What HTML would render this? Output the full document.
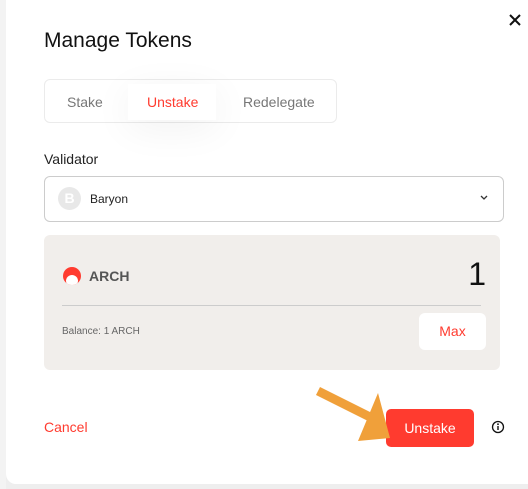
<!DOCTYPE html>
<html><head><style>
body{margin:0;width:528px;height:489px;background:#eeeeee;font-family:"Liberation Sans",sans-serif;position:relative;overflow:hidden}
.m{position:absolute;left:6px;top:-10px;width:540px;height:494px;background:#fff;border-radius:10px}
.a{position:absolute}
</style></head><body>
<div class="a" style="left:0;top:0;width:6px;height:489px;background:#f3f3f3"></div>
<div class="m"></div>
<svg class="a" style="left:508px;top:13px" width="14" height="14"><path d="M2 2L12 12M12 2L2 12" stroke="#111" stroke-width="2"/></svg>
<div class="a" style="left:44px;top:29px;font-size:21px;color:#111">Manage Tokens</div>
<div class="a" style="left:44px;top:79px;width:293px;height:44px;border:1px solid #ebebeb;border-radius:6px;box-sizing:border-box"></div>
<div class="a" style="left:128px;top:84px;width:88px;height:36px;background:#fff;box-shadow:0 8px 40px rgba(0,0,0,.06)"></div>
<div class="a" style="left:67px;top:94px;font-size:14px;color:#777">Stake</div>
<div class="a" style="left:147px;top:94px;font-size:14px;color:#ff3b2f">Unstake</div>
<div class="a" style="left:243px;top:94px;font-size:14px;color:#777">Redelegate</div>
<div class="a" style="left:44px;top:151px;font-size:14px;color:#222">Validator</div>
<div class="a" style="left:44px;top:176px;width:460px;height:46px;border:1px solid #ccc;border-radius:6px;box-sizing:border-box"></div>
<div class="a" style="left:58px;top:187px;width:23px;height:23px;border-radius:50%;background:#e8e8e8;color:#fff;font-size:14px;text-align:center;line-height:23px;font-weight:bold">B</div>
<div class="a" style="left:90px;top:192px;font-size:12px;color:#222">Baryon</div>
<svg class="a" style="left:479px;top:194px" width="10" height="8"><path d="M2 2l3 3 3-3" stroke="#333" stroke-width="1.3" fill="none"/></svg>
<div class="a" style="left:44px;top:235px;width:456px;height:135px;background:#f1eeeb;border-radius:6px"></div>
<div class="a" style="left:63px;top:267px;width:18px;height:18px;border-radius:50%;background:#ff3b2f;overflow:hidden"><div style="position:absolute;left:3px;top:8px;width:12px;height:12px;border-radius:50%;background:#fff"></div></div>
<div class="a" style="left:89px;top:268px;font-size:14px;font-weight:bold;color:#555">ARCH</div>
<div class="a" style="left:460px;top:256px;width:26px;text-align:right;font-size:32px;color:#111">1</div>
<div class="a" style="left:62px;top:305px;width:419px;height:1px;background:#ccc"></div>
<div class="a" style="left:62px;top:326px;font-size:10px;color:#666">Balance: 1 ARCH</div>
<div class="a" style="left:419px;top:313px;width:67px;height:37px;background:#fff;border-radius:6px;color:#ff3b2f;font-size:14px;text-align:center;line-height:37px">Max</div>
<div class="a" style="left:44px;top:419px;font-size:14px;color:#ff3b2f">Cancel</div>
<div class="a" style="left:386px;top:409px;width:88px;height:38px;background:#ff3b2f;border-radius:5px;color:#fff;font-size:14px;text-align:center;line-height:38px">Unstake</div>
<svg class="a" style="left:491px;top:420px" width="14" height="14"><circle cx="7" cy="7" r="5.5" stroke="#111" stroke-width="1.3" fill="none"/><path d="M7 6v4" stroke="#111" stroke-width="1.4"/><circle cx="7" cy="4.2" r=".9" fill="#111"/></svg>
<svg class="a" style="left:310px;top:380px" width="90" height="70"><path d="M8 11 L62 38" stroke="#f0a03a" stroke-width="9" fill="none"/><path d="M68 13 L80 58 L48 61 Z" fill="#f0a03a"/></svg>
</body></html>
